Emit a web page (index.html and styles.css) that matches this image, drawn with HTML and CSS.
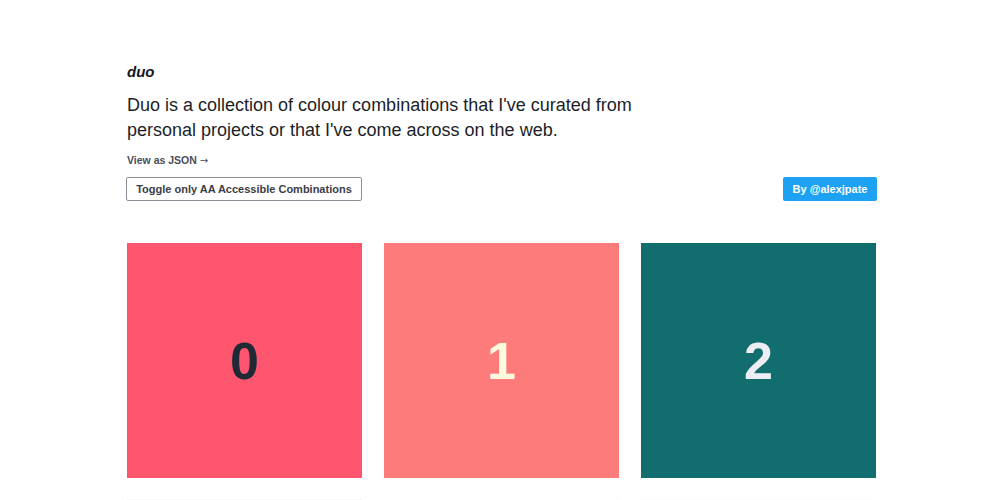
FILE: index.html
```html
<!DOCTYPE html>
<html>
<head>
<meta charset="utf-8">
<link rel="stylesheet" href="styles.css">
</head>
<body>
<div class="page">
  <h1 class="title">duo</h1>
  <p class="intro">Duo is a collection of colour combinations that I've curated from personal projects or that I've come across on the web.</p>
  <a class="json" href="#">View as JSON <span class="arrow">→</span></a>
  <div class="actions">
    <button class="toggle">Toggle only AA Accessible Combinations</button>
    <a class="by" href="#">By @alexjpate</a>
  </div>
  <div class="grid">
    <div class="card c0"><span>0</span></div>
    <div class="card c1"><span>1</span></div>
    <div class="card c2"><span>2</span></div>
    <div class="card c3"><span>3</span></div>
    <div class="card c4"><span>4</span></div>
    <div class="card c5"><span>5</span></div>
  </div>
</div>
</body>
</html>
```
FILE: styles.css
```css
html, body {
  margin: 0;
  padding: 0;
  background: #ffffff;
}
body {
  font-family: "Liberation Sans", Arial, sans-serif;
  color: #1f2430;
}
.page {
  width: 750px;
  margin: 0 0 0 127px;
  padding-top: 63px;
}
.title {
  margin: 0;
  font-size: 15px;
  line-height: 18px;
  font-weight: bold;
  font-style: italic;
  color: #14161c;
}
.intro {
  margin: 12px 0 0 0;
  width: 505px;
  font-size: 18px;
  line-height: 25px;
  color: #1c1f28;
}
.json {
  display: block;
  margin-top: 10px;
  font-size: 10.5px;
  line-height: 14px;
  font-weight: bold;
  color: #4a4d5a;
  text-decoration: none;
}
.arrow {
  font-family: "DejaVu Sans", sans-serif;
  font-weight: normal;
  font-size: 10px;
  color: #4a4d5a;
}
.actions {
  display: flex;
  justify-content: space-between;
  align-items: center;
  margin-top: 9px;
}
.toggle {
  margin-left: -1px;
  height: 24px;
  width: 236px;
  padding: 0;
  background: #ffffff;
  border: 1px solid #8c8f96;
  border-radius: 2px;
  font-family: "Liberation Sans", Arial, sans-serif;
  font-size: 11px;
  font-weight: bold;
  color: #3a3d47;
}
.by {
  display: block;
  height: 24px;
  line-height: 24px;
  width: 94px;
  text-align: center;
  background: #1da1f2;
  color: #ffffff;
  font-size: 11px;
  font-weight: bold;
  text-decoration: none;
  border-radius: 2px;
}
.grid {
  display: grid;
  grid-template-columns: repeat(3, 235px);
  column-gap: 22px;
  row-gap: 21px;
  margin-top: 42px;
}
.card {
  height: 235px;
  display: flex;
  align-items: center;
  justify-content: center;
  font-size: 52px;
  font-weight: bold;
}
.c0 { background: #ff5670; color: #1f2a36; }
.c1 { background: #fd7b7b; color: #fdfae0; }
.c2 { background: #116d6e; color: #eceef4; }
.c3 { background: #f5f5f5; color: #222; }
.c4 { background: #fdfdfd; color: #222; }
.c5 { background: #fcfcfc; color: #222; }
```
